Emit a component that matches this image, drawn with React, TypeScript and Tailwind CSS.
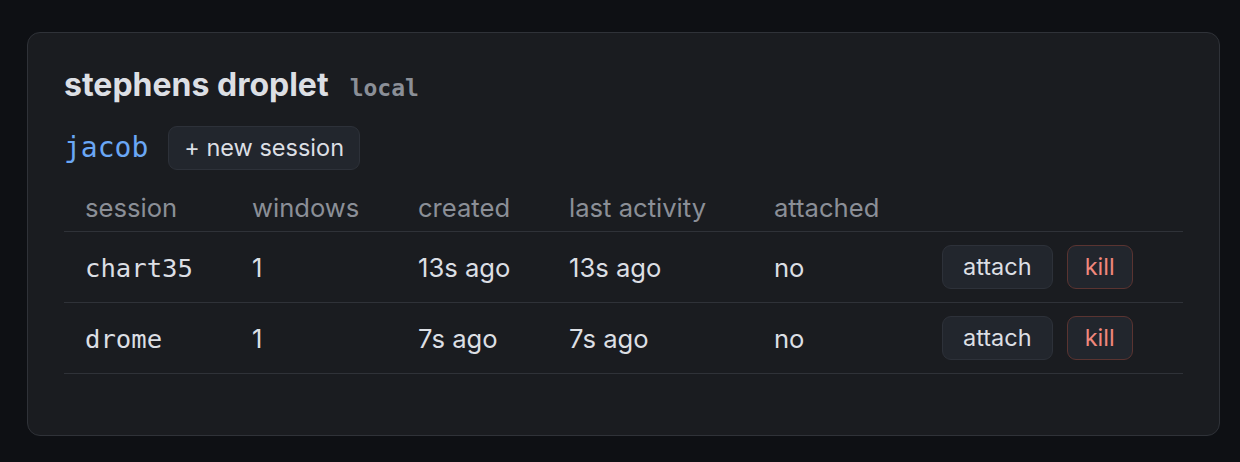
import React from 'react'

const SESSIONS = [
  { name: 'chart35', windows: 1, created: '13s ago', activity: '13s ago', attached: 'no' },
  { name: 'drome', windows: 1, created: '7s ago', activity: '7s ago', attached: 'no' },
]

const mono = "font-['DejaVu_Sans_Mono',monospace]"

function Btn({
  children,
  danger,
  className = 'px-[19px]',
}: {
  children: React.ReactNode
  danger?: boolean
  className?: string
}) {
  return (
    <button
      className={
        'h-[44px] rounded-[9px] border bg-[#22262d] text-[23.5px] leading-none ' +
        className +
        ' ' +
        (danger ? 'border-[#5a3431] text-[#f0877c]' : 'border-[#2d3139] text-[#dcdfe4]')
      }
    >
      {children}
    </button>
  )
}

export default function App() {
  return (
    <div className="min-h-[462px] bg-[#0e1014] pt-[32px] pl-[27px] pr-[20px] font-['Inter',sans-serif] text-[#dcdfe4]">
      <div className="h-[404px] rounded-[13px] border border-[#2f3238] bg-[#1a1c20] px-[36px] pt-[33px]">
        <div className="flex items-baseline gap-[21px]">
          <h2 className="text-[32px] font-bold leading-[1.2] text-[#dcdfe4]">stephens droplet</h2>
          <span className={`${mono} text-[23px] font-bold text-[#8b8f97]`}>local</span>
        </div>

        <div className="mt-[20px] flex items-center gap-[20px]">
          <span className={`${mono} text-[28px] leading-none text-[#6aa7f5]`}>jacob</span>
          <Btn className="px-[15px]">+ new session</Btn>
        </div>

        <table className="mt-[15px] w-full table-fixed border-collapse text-left text-[25.6px]">
          <colgroup>
            <col className="w-[167px]" />
            <col className="w-[166px]" />
            <col className="w-[151px]" />
            <col className="w-[205px]" />
            <col className="w-[168px]" />
            <col />
          </colgroup>
          <thead>
            <tr className="border-b border-[#2f3238] text-[#8b8f97]">
              <th className="px-[21px] py-[9px] font-normal leading-[28px]">session</th>
              <th className="px-[21px] py-[9px] font-normal leading-[28px]">windows</th>
              <th className="px-[21px] py-[9px] font-normal leading-[28px]">created</th>
              <th className="px-[21px] py-[9px] font-normal leading-[28px]">last activity</th>
              <th className="px-[21px] py-[9px] font-normal leading-[28px]">attached</th>
              <th className="px-[21px] py-[9px]" />
            </tr>
          </thead>
          <tbody>
            {SESSIONS.map((s) => (
              <tr key={s.name} className="border-b border-[#2f3238]">
                <td className={`${mono} px-[21px] pt-[15px] pb-[11px] leading-[1.2]`}>{s.name}</td>
                <td className="px-[21px] pt-[15px] pb-[11px] leading-[1.2]">{s.windows}</td>
                <td className="px-[21px] pt-[15px] pb-[11px] leading-[1.2]">{s.created}</td>
                <td className="px-[21px] pt-[15px] pb-[11px] leading-[1.2]">{s.activity}</td>
                <td className="px-[21px] pt-[15px] pb-[11px] leading-[1.2]">{s.attached}</td>
                <td className="px-[21px] pt-[13px] pb-[13px]">
                  <div className="flex gap-[14px]">
                    <Btn className="px-[20px]">attach</Btn>
                    <Btn danger className="px-[17px]">
                      kill
                    </Btn>
                  </div>
                </td>
              </tr>
            ))}
          </tbody>
        </table>
      </div>
    </div>
  )
}
